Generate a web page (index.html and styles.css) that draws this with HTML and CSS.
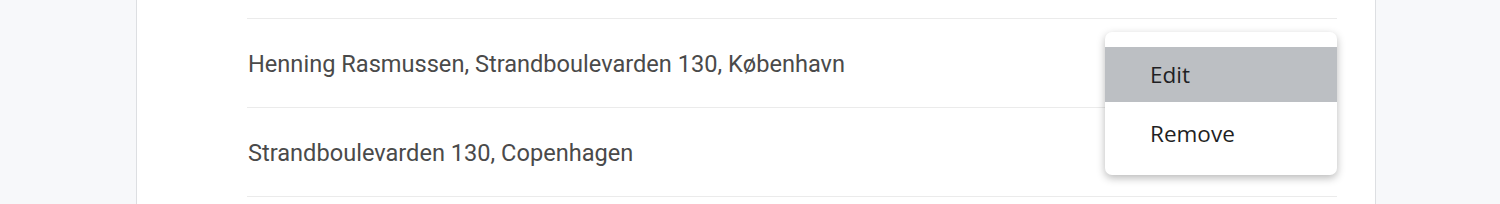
FILE: index.html
```html
<!DOCTYPE html>
<html lang="da">
<head>
  <meta charset="UTF-8">
  <meta name="viewport" content="width=device-width, initial-scale=1.0">
  <title>Adresser</title>
  <link rel="stylesheet" href="styles.css">
</head>
<body>
  <div class="card">
    <ul class="address-list">
      <li class="address-row">
        <span class="address-text">Henning Rasmussen, Strandboulevarden 130, København</span>
        <div class="menu">
          <div class="menu-item active">Edit</div>
          <div class="menu-item">Remove</div>
        </div>
      </li>
      <li class="address-row">
        <span class="address-text">Strandboulevarden 130, Copenhagen</span>
      </li>
      <li class="address-row last"></li>
    </ul>
  </div>
</body>
</html>
```

FILE: styles.css
```css
html, body {
  margin: 0;
  padding: 0;
  height: 100%;
  overflow: hidden;
  background-color: #f7f8fa;
  font-family: Roboto, "Liberation Sans", sans-serif;
}

.card {
  margin-left: 136px;
  width: 1240px;
  height: 100%;
  background-color: white;
  border-left: 1px solid #dddfe2;
  border-right: 1px solid #dddfe2;
  padding: 18px 38px 0 110px;
  box-sizing: border-box;
}

.address-list {
  list-style: none;
  margin: 0;
  padding: 0;
}

.address-row {
  position: relative;
  display: flex;
  align-items: center;
  height: 89px;
  border-top: 1px solid #ebebeb;
  box-sizing: border-box;
}

.address-row.last {
  height: 8px;
}

.address-text {
  font-size: 23.6px;
  color: #4a4a4a;
  padding-left: 1px;
  padding-top: 2px;
}

.menu {
  position: absolute;
  top: 13px;
  right: 0;
  width: 232px;
  padding: 15px 0 14px;
  background: white;
  border-radius: 7px;
  box-shadow: 0 3px 8px rgba(0, 0, 0, 0.28);
  z-index: 10;
}

.menu-item {
  height: 55px;
  line-height: 55px;
  padding-left: 45px;
  font-family: "Open Sans", sans-serif;
  font-size: 22.5px;
  color: #1f1f24;
}

.menu-item + .menu-item {
  margin-top: 4px;
}

.menu-item.active {
  background-color: #bcbfc3;
}
```
